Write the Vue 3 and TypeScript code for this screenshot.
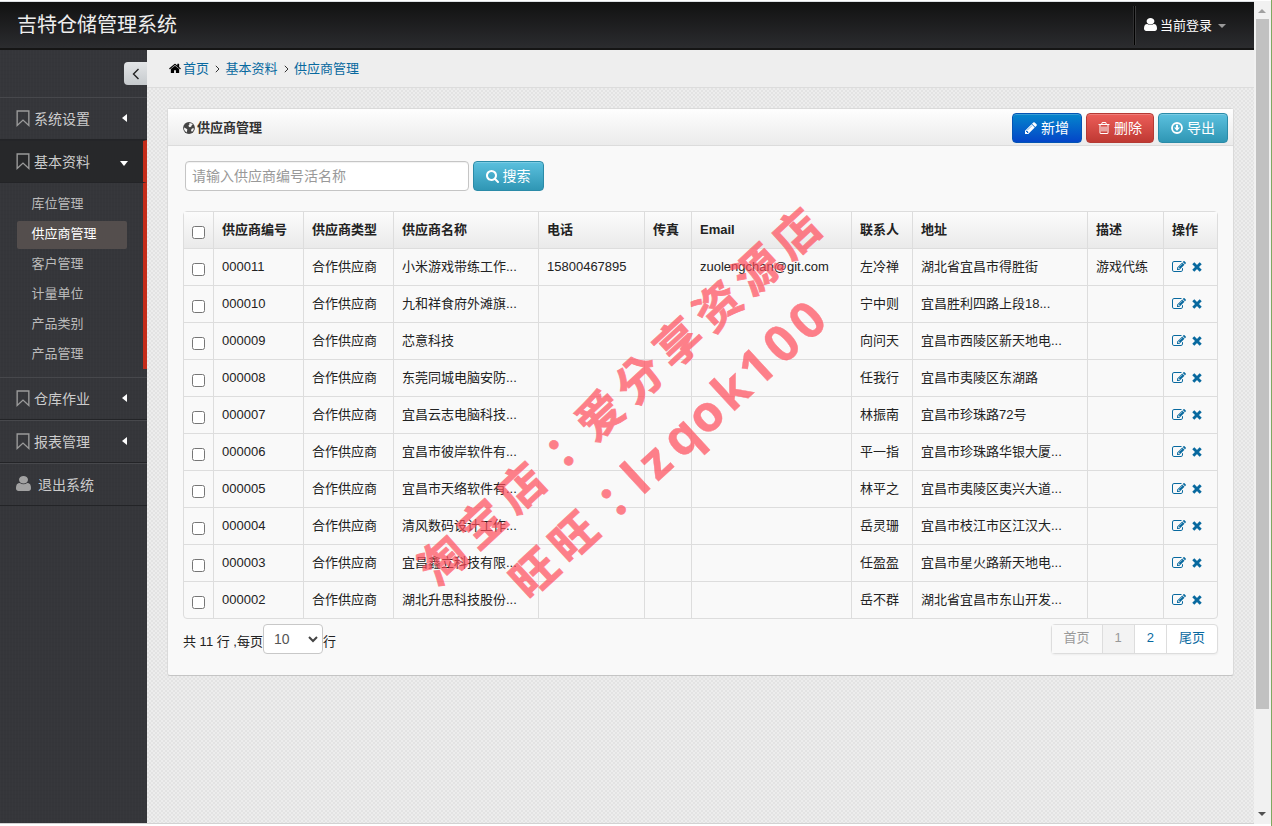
<script setup lang="ts">
interface Supplier {
  code: string
  name: string
  phone?: string
  email?: string
  contact: string
  address: string
  note?: string
}

const columns: string[] = ['供应商编号', '供应商类型', '供应商名称', '电话', '传真', 'Email', '联系人', '地址', '描述', '操作']

const suppliers: Supplier[] = [
  { code: '000011', name: '小米游戏带练工作...', phone: '15800467895', email: 'zuolengchan@git.com', contact: '左冷禅', address: '湖北省宜昌市得胜街', note: '游戏代练' },
  { code: '000010', name: '九和祥食府外滩旗...', contact: '宁中则', address: '宜昌胜利四路上段18...' },
  { code: '000009', name: '芯意科技', contact: '向问天', address: '宜昌市西陵区新天地电...' },
  { code: '000008', name: '东莞同城电脑安防...', contact: '任我行', address: '宜昌市夷陵区东湖路' },
  { code: '000007', name: '宜昌云志电脑科技...', contact: '林振南', address: '宜昌市珍珠路72号' },
  { code: '000006', name: '宜昌市彼岸软件有...', contact: '平一指', address: '宜昌市珍珠路华银大厦...' },
  { code: '000005', name: '宜昌市天络软件有...', contact: '林平之', address: '宜昌市夷陵区夷兴大道...' },
  { code: '000004', name: '清风数码设计工作...', contact: '岳灵珊', address: '宜昌市枝江市区江汉大...' },
  { code: '000003', name: '宜昌鑫立科技有限...', contact: '任盈盈', address: '宜昌市星火路新天地电...' },
  { code: '000002', name: '湖北升思科技股份...', contact: '岳不群', address: '湖北省宜昌市东山开发...' },
]

const subItems: string[] = ['库位管理', '供应商管理', '客户管理', '计量单位', '产品类别', '产品管理']

const icons = {
  home: 'M1472 992v480q0 26-19 45t-45 19h-384v-384h-256v384h-384q-26 0-45-19t-19-45v-480q0-1 .5-3t.5-3l575-474 575 474q1 2 1 6zm223-69l-62 74q-8 9-21 11h-3q-13 0-21-7l-692-577-692 577q-12 8-24 7-13-2-21-11l-62-74q-8-10-7-23.5t11-21.5l719-599q32-26 76-26t76 26l244 204v-195q0-14 9-23t23-9h192q14 0 23 9t9 23v408l219 182q10 8 11 21.5t-7 23.5z',
  search: 'M1216 832q0-185-131.5-316.5t-316.5-131.5-316.5 131.5-131.5 316.5 131.5 316.5 316.5 131.5 316.5-131.5 131.5-316.5zm512 832q0 52-38 90t-90 38q-54 0-90-38l-343-342q-179 124-399 124-143 0-273.5-55.5t-225-150-150-225-55.5-273.5 55.5-273.5 150-225 225-150 273.5-55.5 273.5 55.5 225 150 150 225 55.5 273.5q0 220-124 399l343 343q37 37 37 90z',
  pencil: 'M491 1536l91-91-235-235-91 91v107h128v128h107zm523-928q0-22-22-22-10 0-17 7l-542 542q-7 7-7 17 0 22 22 22 10 0 17-7l542-542q7-7 7-17zm-54-192l416 416-832 832h-416v-416zm683 96q0 53-37 90l-166 166-416-416 166-165q36-38 90-38 53 0 91 38l235 234q37 39 37 91z',
  edit: 'M888 1184l116-116-152-152-116 116v56h96v96h56zm440-720q-16-16-33 1l-350 350q-17 17-1 33t33-1l350-350q17-17 1-33zm80 594v190q0 119-84.5 203.5t-203.5 84.5h-832q-119 0-203.5-84.5t-84.5-203.5v-832q0-119 84.5-203.5t203.5-84.5h832q63 0 117 25 15 7 18 23 3 17-9 29l-49 49q-14 14-32 8-23-6-45-6h-832q-66 0-113 47t-47 113v832q0 66 47 113t113 47h832q66 0 113-47t47-113v-126q0-13 9-22l64-64q15-15 35-7t20 29zm-96-738l288 288-672 672h-288v-288zm444 132l-92 92-288-288 92-92q28-28 68-28t68 28l152 152q28 28 28 68t-28 68z',
  trash: 'M704 736v576q0 14-9 23t-23 9h-64q-14 0-23-9t-9-23v-576q0-14 9-23t23-9h64q14 0 23 9t9 23zm256 0v576q0 14-9 23t-23 9h-64q-14 0-23-9t-9-23v-576q0-14 9-23t23-9h64q14 0 23 9t9 23zm256 0v576q0 14-9 23t-23 9h-64q-14 0-23-9t-9-23v-576q0-14 9-23t23-9h64q14 0 23 9t9 23zm128 724v-948h-896v948q0 22 7 40.5t14.5 27 10.5 8.5h832q3 0 10.5-8.5t14.5-27 7-40.5zm-672-1076h448l-48-117q-7-9-17-11h-317q-10 2-17 11zm928 32v64q0 14-9 23t-23 9h-96v948q0 83-47 143.5t-113 60.5h-832q-66 0-113-58.5t-47-141.5v-952h-96q-14 0-23-9t-9-23v-64q0-14 9-23t23-9h309l70-167q15-37 54-63t79-26h320q40 0 79 26t54 63l70 167h309q14 0 23 9t9 23z',
  user: 'M1536 1399q0 109-62.500 187t-150.500 78h-854q-88 0-150.500-78t-62.500-187q0-85 8.500-160.500t31.500-152 58.500-131 94-89 134.500-34.500q131 128 313 128t313-128q76 0 134.500 34.500t94 89 58.500 131 31.500 152 8.500 160.500zm-256-887q0 159-112.500 271.500t-271.500 112.500-271.500-112.500-112.500-271.500 112.500-271.500 271.500-112.500 271.500 112.500 112.500 271.500z',
}
</script>

<template>
  <div class="window">
    <div class="view">
      <header class="topbar">
        <div class="brand">吉特仓储管理系统</div>
        <div class="account">
          <svg class="user" viewBox="256 128 1280 1536" preserveAspectRatio="none"><path :d="icons.user" /></svg>
          <span>当前登录</span>
          <i class="caret"></i>
        </div>
      </header>
      <div class="body">
        <aside class="sidebar">
          <div class="toggle-row">
            <div class="toggle"><svg viewBox="0 0 8 12"><path d="M6.500 1 1.500 6l5 5" /></svg></div>
          </div>
          <div class="menu">
            <svg class="mark" viewBox="0 0 13 16"><path d="M1 1h11v13.500l-5.500-5-5.500 5z" /></svg>
            <span>系统设置</span><i class="arrow"></i>
          </div>
          <div class="group">
            <div class="menu open">
              <svg class="mark" viewBox="0 0 13 16"><path d="M1 1h11v13.500l-5.500-5-5.500 5z" /></svg>
              <span>基本资料</span><i class="arrow down"></i>
            </div>
            <div class="submenu">
              <div v-for="item in subItems" :key="item" class="sub" :class="{ active: item === '供应商管理' }">{{ item }}</div>
            </div>
          </div>
          <div class="menu">
            <svg class="mark" viewBox="0 0 13 16"><path d="M1 1h11v13.500l-5.500-5-5.500 5z" /></svg>
            <span>仓库作业</span><i class="arrow"></i>
          </div>
          <div class="menu">
            <svg class="mark" viewBox="0 0 13 16"><path d="M1 1h11v13.500l-5.500-5-5.500 5z" /></svg>
            <span>报表管理</span><i class="arrow"></i>
          </div>
          <div class="menu exit">
            <svg class="person" viewBox="256 128 1280 1536" preserveAspectRatio="none"><path :d="icons.user" /></svg>
            <span>退出系统</span>
          </div>
        </aside>
        <main class="main">
          <nav class="crumbs">
            <svg class="home" viewBox="64 200 1664 1400"><path :d="icons.home" /></svg>
            <a>首页</a>
            <svg class="sep" viewBox="0 0 5 8"><path d="M.8.8 4 4 .8 7.200" /></svg>
            <a>基本资料</a>
            <svg class="sep" viewBox="0 0 5 8"><path d="M.8.8 4 4 .8 7.200" /></svg>
            <a>供应商管理</a>
          </nav>
          <section class="panel">
            <div class="panel-head">
              <svg class="globe" viewBox="0 0 12 12">
                <circle cx="6" cy="6" r="5.900" />
                <path d="M6.200.9 8.600 1.500 9.800 2.800 8.700 3.200 8.300 4.500 7 5.300 5.900 4.800 5.500 3.600 6.600 2.300zM1.100 5.600 2.600 6.300 4.300 7.300 4.100 8.800 3.700 10.400 2 9 1.100 7.400zM9 6.600l1.900-.4-.3 1.700-1.500 1.900-1-.8.200-1.500z" />
              </svg>
              <b>供应商管理</b>
              <div class="actions">
                <button class="btn add"><svg viewBox="128 128 1536 1536"><path :d="icons.pencil" /></svg>新增</button>
                <button class="btn del"><svg viewBox="192 128 1408 1536"><path :d="icons.trash" /></svg>删除</button>
                <button class="btn info">
                  <svg viewBox="0 0 12 12"><circle cx="6" cy="6" r="5" fill="none" stroke="#fff" stroke-width="1.800" /><path d="M5 2.800h2v2.700h1.900L6 8.900 3.100 5.500H5z" /></svg>导出
                </button>
              </div>
            </div>
            <div class="panel-body">
              <div class="search">
                <input type="text" placeholder="请输入供应商编号活名称" />
                <button class="btn info find"><svg viewBox="64 128 1664 1664"><path :d="icons.search" /></svg>搜索</button>
              </div>
              <table>
                <colgroup>
                  <col class="w29" /><col class="w90" /><col class="w90" /><col class="w145" /><col class="w106" /><col class="w47" />
                  <col class="w160" /><col class="w61" /><col class="w175" /><col class="w76" /><col class="w54" />
                </colgroup>
                <thead>
                  <tr>
                    <th class="check"><input type="checkbox" /></th>
                    <th v-for="column in columns" :key="column">{{ column }}</th>
                  </tr>
                </thead>
                <tbody>
                  <tr v-for="row in suppliers" :key="row.code">
                    <td class="check"><input type="checkbox" /></td>
                    <td>{{ row.code }}</td>
                    <td>合作供应商</td>
                    <td>{{ row.name }}</td>
                    <td>{{ row.phone }}</td>
                    <td></td>
                    <td>{{ row.email }}</td>
                    <td>{{ row.contact }}</td>
                    <td>{{ row.address }}</td>
                    <td>{{ row.note }}</td>
                    <td>
                      <div class="ops">
                        <svg class="edit" viewBox="0 128 1792 1536"><path :d="icons.edit" /></svg>
                        <svg class="cross" viewBox="0 0 10 10"><path d="m1.300 1.300 7.400 7.400m0-7.400L1.300 8.700" /></svg>
                      </div>
                    </td>
                  </tr>
                </tbody>
              </table>
              <div class="foot">
                <div class="total">
                  <span>共 11 行 ,每页</span>
                  <div class="select">10<svg viewBox="0 0 10 7"><path d="m1 1 4 4 4-4" /></svg></div>
                  <span>行</span>
                </div>
                <div class="pages">
                  <span class="off">首页</span><span class="current">1</span><span>2</span><span>尾页</span>
                </div>
              </div>
            </div>
          </section>
        </main>
      </div>
    </div>
    <div class="scrollbar">
      <i class="up"></i>
      <div class="thumb"></div>
      <i class="dn"></i>
    </div>
    <svg class="watermark" viewBox="0 0 1272 826">
      <g transform="translate(442.500 560) rotate(-42.700)">
        <text y="17" x="0 53.500 107">淘宝店</text>
        <text y="19" x="160">：</text>
        <text y="17" x="214 267.500 321 374.500 428 481.500">爱分享资源店</text>
      </g>
      <g transform="translate(534 573) rotate(-42.700)">
        <text y="17" x="0 53.500">旺旺</text>
        <text y="19" x="107">：</text>
        <text class="latin" y="17" x="139 164.500 201 233.500 269 303 337.500 372">lzqok100</text>
      </g>
    </svg>
  </div>
</template>

<style>
html,
body {
  margin: 0;
  overflow: hidden;
}
</style>

<style scoped>
.window {
  position: relative;
  box-sizing: border-box;
  display: flex;
  width: 1272px;
  height: 826px;
  padding-top: 1px;
  border-right: 1px solid #7fa860;
  background: #fff;
  font: 13px/20px "Liberation Sans", "Noto Sans CJK SC", sans-serif;
  color: #222;
}
.view {
  width: 1254px;
  height: 821px;
  border-top: 1px solid #dcdfe3;
  border-bottom: 1px solid #d2d2d2;
}
.topbar {
  box-sizing: border-box;
  display: flex;
  justify-content: space-between;
  height: 48px;
  padding-left: 17px;
  border-bottom: 2px solid #151515;
  background: linear-gradient(#111, #2b2c2f);
  color: #fff;
}
.brand {
  font-size: 20px;
  line-height: 46px;
  color: #eee;
}
.account {
  display: flex;
  align-items: center;
  box-sizing: border-box;
  width: 120px;
  height: 39px;
  margin-top: 4px;
  padding-left: 9px;
  border-left: 1px solid #000;
  box-shadow: inset 1px 0 #3a3a3b, -1px 0 #303031;
}
.user {
  width: 13px;
  height: 13px;
  margin: 0 3px 2px 0;
  fill: #fff;
}
.caret {
  margin-left: 6px;
  margin-top: 1px;
  border: 4px solid transparent;
  border-top-color: #999;
  border-bottom: 0;
}
.body {
  display: flex;
  height: 773px;
}
.sidebar {
  width: 147px;
  background:
    repeating-linear-gradient(90deg, rgba(255, 255, 255, 0.01) 0 1px, transparent 1px 3px),
    repeating-linear-gradient(rgba(0, 0, 0, 0.025) 0 1px, transparent 1px 4px),
    #35363a;
}
.toggle-row {
  display: flex;
  justify-content: flex-end;
  height: 35px;
  padding-top: 12px;
}
.toggle {
  display: flex;
  align-items: center;
  justify-content: center;
  width: 23px;
  height: 23px;
  border-radius: 4px 0 0 4px;
  background: linear-gradient(#e3e5e7, #c6cacd);
}
.toggle svg {
  width: 8px;
  height: 12px;
  fill: none;
  stroke: #222;
  stroke-width: 1.4;
}
.menu {
  display: flex;
  align-items: center;
  box-sizing: border-box;
  height: 43px;
  padding-left: 16px;
  border-top: 1px solid #47484c;
  border-bottom: 1px solid #232427;
  font-size: 14px;
  color: #ccc;
}
.menu span {
  width: 87px;
}
.mark {
  width: 14px;
  height: 17px;
  margin: 0 4px 1px 0;
  fill: none;
  stroke: #9a9a9a;
  stroke-width: 1.3;
}
.person {
  width: 15px;
  height: 15px;
  margin: 0 7px 2px 0;
  fill: #a2a2a2;
}
.arrow {
  margin: 0 0 2px 1px;
  border: 4px solid transparent;
  border-left: 0;
  border-right: 5px solid #fff;
}
.arrow.down {
  margin: 3px 0 0 -1px;
  border: 4px solid transparent;
  border-top: 5px solid #fff;
  border-bottom: 0;
}
.group {
  box-sizing: border-box;
  height: 237px;
}
.menu.open {
  width: 147px;
  border-top-color: #242528;
  border-right: 4px solid #c42c1a;
  background: #27282a;
}
.submenu {
  box-sizing: border-box;
  width: 147px;
  height: 186px;
  padding: 8px 16px 0 17px;
  border-right: 4px solid #c42c1a;
}
.sub {
  height: 28px;
  margin-bottom: 2px;
  padding-left: 14.5px;
  border-radius: 2px;
  line-height: 26px;
  color: #bbb;
}
.sub.active {
  background: #544e4d;
  color: #fff;
}
.exit span {
  width: auto;
}
.main {
  width: 1107px;
  background: repeating-conic-gradient(#e3e3e3 0 25%, #ededed 0 50%) 0 0 / 4px 4px;
}
.crumbs {
  display: flex;
  align-items: center;
  box-sizing: border-box;
  height: 38px;
  padding-left: 22px;
  border-bottom: 1px solid #dcdcdc;
  background: #eee;
}
.crumbs a {
  color: #08699f;
}
.home {
  width: 12px;
  height: 11px;
  margin-right: 2px;
}
.sep {
  width: 5px;
  height: 8px;
  margin: 0 5.5px 0 6px;
  fill: none;
  stroke: #333;
}
.panel {
  box-sizing: border-box;
  width: 1067px;
  height: 568px;
  margin: 20px 0 0 20px;
  border: 1px solid #dadada;
  border-bottom-color: #c5c5c5;
  border-radius: 3px;
  background: #f9f9f9;
}
.panel-head {
  display: flex;
  align-items: center;
  box-sizing: border-box;
  height: 37px;
  padding: 0 5px 0 15px;
  border-bottom: 1px solid #dcdcdc;
  background: linear-gradient(#fefefe, #ebebeb);
  color: #333;
}
.panel-head b {
  margin-top: 2px;
}
.globe {
  width: 12px;
  height: 12px;
  margin: 2px 2px 0 0;
  fill: #444;
}
.globe path {
  fill: #f6f6f6;
}
.actions {
  display: flex;
  gap: 4px;
  margin: 1px 0 0 auto;
}
.btn {
  display: flex;
  align-items: center;
  box-sizing: border-box;
  width: 70px;
  height: 30px;
  padding: 0 0 0 12px;
  border: 1px solid #2b8ba8;
  border-radius: 4px;
  box-shadow: inset 0 1px rgba(255, 255, 255, 0.2);
  font: 14px/20px "Liberation Sans", "Noto Sans CJK SC", sans-serif;
  color: #fff;
  white-space: nowrap;
}
.btn svg {
  width: 12px;
  height: 12px;
  margin-right: 4px;
  fill: #fff;
}
.add {
  border-color: #0454b4;
  background: linear-gradient(#0586cc, #0445c8);
}
.del {
  width: 68px;
  padding-left: 11px;
  border-color: #b53a34;
  background: linear-gradient(#ec5e59, #bf3933);
}
.info {
  background: linear-gradient(#5bc0de, #2f96b4);
}
.panel-body {
  padding: 15px 15px 0;
}
.search {
  display: flex;
  gap: 4px;
  padding-left: 2px;
}
.search input {
  box-sizing: border-box;
  width: 284px;
  height: 30px;
  padding: 4px 6px;
  border: 1px solid #c5c5c5;
  border-radius: 4px;
  background: #fff;
  box-shadow: inset 0 1px 1px rgba(0, 0, 0, 0.06);
  font: 14px/20px "Liberation Sans", "Noto Sans CJK SC", sans-serif;
}
.search input::placeholder {
  color: #999;
}
.find {
  width: 71px;
}
.find svg {
  width: 13px;
  height: 13px;
  margin-right: 3.5px;
}
table {
  box-sizing: border-box;
  width: 1035px;
  margin-top: 20px;
  border: 1px solid #ddd;
  border-radius: 4px;
  border-collapse: separate;
  border-spacing: 0;
  table-layout: fixed;
}
.w29 { width: 29px; }
.w90 { width: 90px; }
.w145 { width: 145px; }
.w106 { width: 106px; }
.w47 { width: 47px; }
.w160 { width: 160px; }
.w61 { width: 61px; }
.w175 { width: 175px; }
.w76 { width: 76px; }
.w54 { width: 54px; }
th,
td {
  box-sizing: border-box;
  height: 37px;
  padding: 0 0 0 8px;
  border-top: 1px solid #ddd;
  border-left: 1px solid #ddd;
  line-height: 20px;
  text-align: left;
  white-space: nowrap;
}
th {
  height: 36px;
  border-top: 0;
  background: linear-gradient(#fcfcfc, #eaeaea);
}
.check {
  padding: 4px 0 0 8px;
  border-left: 0;
}
td.check {
  padding-top: 5px;
}
.check input {
  display: block;
  width: 13px;
  height: 13px;
  margin: 0;
}
.ops {
  display: flex;
  align-items: center;
}
.edit {
  width: 14px;
  height: 12px;
  margin-bottom: 1px;
  fill: #08699f;
}
.cross {
  width: 10px;
  height: 10px;
  margin: 0 0 1px 6px;
  stroke: #08699f;
  stroke-width: 2.9;
}
.foot {
  display: flex;
  justify-content: space-between;
  margin-top: 5px;
}
.total {
  display: flex;
}
.total span {
  padding-top: 8px;
}
.select {
  display: flex;
  align-items: center;
  justify-content: space-between;
  box-sizing: border-box;
  width: 60px;
  height: 30px;
  padding: 0 4px 0 10px;
  border: 1px solid #c8c8c8;
  border-radius: 4px;
  background: #fff;
  font-size: 14px;
  color: #555;
}
.select svg {
  width: 10px;
  height: 7px;
  fill: none;
  stroke: #444;
  stroke-width: 2;
}
.pages {
  display: flex;
  box-sizing: border-box;
  height: 30px;
  border: 1px solid #ddd;
  border-radius: 4px;
  background: #fff;
  box-shadow: 0 1px 2px rgba(0, 0, 0, 0.05);
  line-height: 26px;
  color: #08699f;
}
.pages span {
  padding: 0 12px;
}
.pages span + span {
  border-left: 1px solid #ddd;
}
.pages .off,
.pages .current {
  background: #f9f9f9;
  color: #999;
}
.pages .current {
  background: #f3f3f3;
}
.scrollbar {
  display: flex;
  flex-direction: column;
  align-items: center;
  box-sizing: border-box;
  width: 17px;
  height: 823px;
  padding-right: 1px;
  background: #f1f1f1;
}
.up {
  margin-top: 8px;
  border: 4px solid transparent;
  border-top: 0;
  border-bottom-color: #a0a0a0;
}
.thumb {
  width: 13px;
  height: 690px;
  margin-top: 6px;
  background: #c1c1c1;
}
.dn {
  margin: auto 0 8px;
  border: 4px solid transparent;
  border-bottom: 0;
  border-top-color: #505050;
}
.watermark {
  position: absolute;
  top: 0;
  left: 0;
  width: 1272px;
  height: 826px;
  opacity: 0.7;
  pointer-events: none;
}
.watermark text {
  fill: #ff4c5a;
  stroke: #ff4c5a;
  stroke-width: 0.8px;
  font: 700 46px "Noto Sans CJK TC", sans-serif;
  text-anchor: middle;
}
.watermark .latin {
  stroke-width: 0.4px;
  font: 700 50px "Open Sans", "Noto Sans", sans-serif;
}
</style>
